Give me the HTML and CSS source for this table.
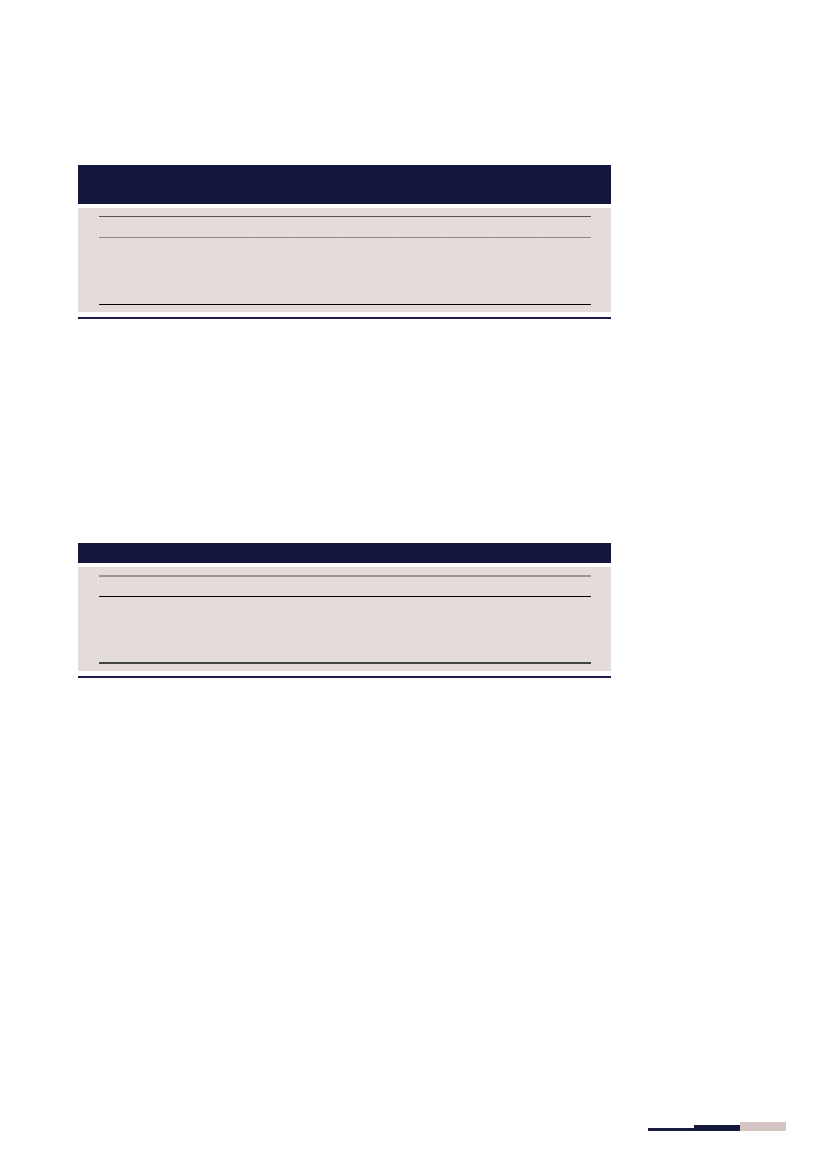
FILE: index.html
```html
<!DOCTYPE html>
<html lang="en">
<head>
<meta charset="utf-8">
<title>Tables</title>
<link rel="stylesheet" href="styles.css">
</head>
<body>
<div class="page">
  <section class="block block-one">
    <div class="block-head tall"></div>
    <div class="block-body">
      <div class="grid">
        <div class="row head-row r1"><span></span><span></span><span></span><span></span><span></span><span></span><span></span><span></span></div>
        <div class="row body-row r1"><span></span><span></span><span></span><span></span><span></span><span></span><span></span><span></span></div>
      </div>
    </div>
    <div class="block-rule"></div>
  </section>

  <section class="block block-two">
    <div class="block-head short"></div>
    <div class="block-body">
      <div class="grid">
        <div class="row head-row r2"><span></span><span></span><span></span><span></span><span></span><span></span><span></span><span></span></div>
        <div class="row body-row r2"><span></span><span></span><span></span><span></span><span></span><span></span><span></span><span></span></div>
      </div>
    </div>
    <div class="block-rule"></div>
  </section>

  <footer class="footer">
    <span class="bar bar-a"></span>
    <span class="bar bar-b"></span>
    <span class="bar bar-c"></span>
  </footer>
</div>
</body>
</html>
```

FILE: styles.css
```css
html, body {
  margin: 0;
  padding: 0;
  background: #ffffff;
  font-family: "Liberation Sans", Arial, sans-serif;
}

.page {
  width: 827px;
  height: 1169px;
  box-sizing: border-box;
  padding: 165px 0 0 78px;
  display: flex;
  flex-direction: column;
}

.block {
  width: 533px;
  display: flex;
  flex-direction: column;
}

.block-two {
  margin-top: 224px;
}

.block-head {
  background: #15163d;
}
.block-head.tall { height: 39px; }
.block-head.short { height: 20px; }

.block-body {
  margin-top: 4px;
  background: #e3dcdb;
  padding: 8px 20px 7px 20px;
}

.grid {
  display: flex;
  flex-direction: column;
  border-left: 1px solid #e6e0df;
  width: 493px;
  box-sizing: border-box;
}

.row {
  display: grid;
  grid-template-columns: 154px 43px 48px 49px 50px 49px 50px 49px;
}

.row span {
  border-right: 1px solid #e6e1e0;
}
.row span:last-child {
  border-right: 0;
}

/* table one */
.head-row.r1 {
  height: 20px;
  border-top: 1px solid #555555;
  border-bottom: 1px solid #8c8c8c;
}
.body-row.r1 {
  height: 66px;
  border-bottom: 1px solid #000000;
}

/* table two */
.head-row.r2 {
  height: 19px;
  border-top: 2px solid #969696;
  border-bottom: 1px solid #000000;
}
.body-row.r2 {
  height: 65px;
  border-bottom: 2px solid #444444;
}

.block-rule {
  margin-top: 5px;
  height: 2px;
  background: #1d1d4d;
}

.footer {
  margin-top: auto;
  margin-bottom: 38px;
  margin-left: 570px;
  display: flex;
  align-items: flex-end;
}

.bar {
  display: block;
  width: 46px;
}
.bar-a {
  height: 3px;
  background: #1c1c40;
}
.bar-b {
  height: 6px;
  background: #17173d;
}
.bar-c {
  height: 9px;
  background: #d4c5c4;
}
```
